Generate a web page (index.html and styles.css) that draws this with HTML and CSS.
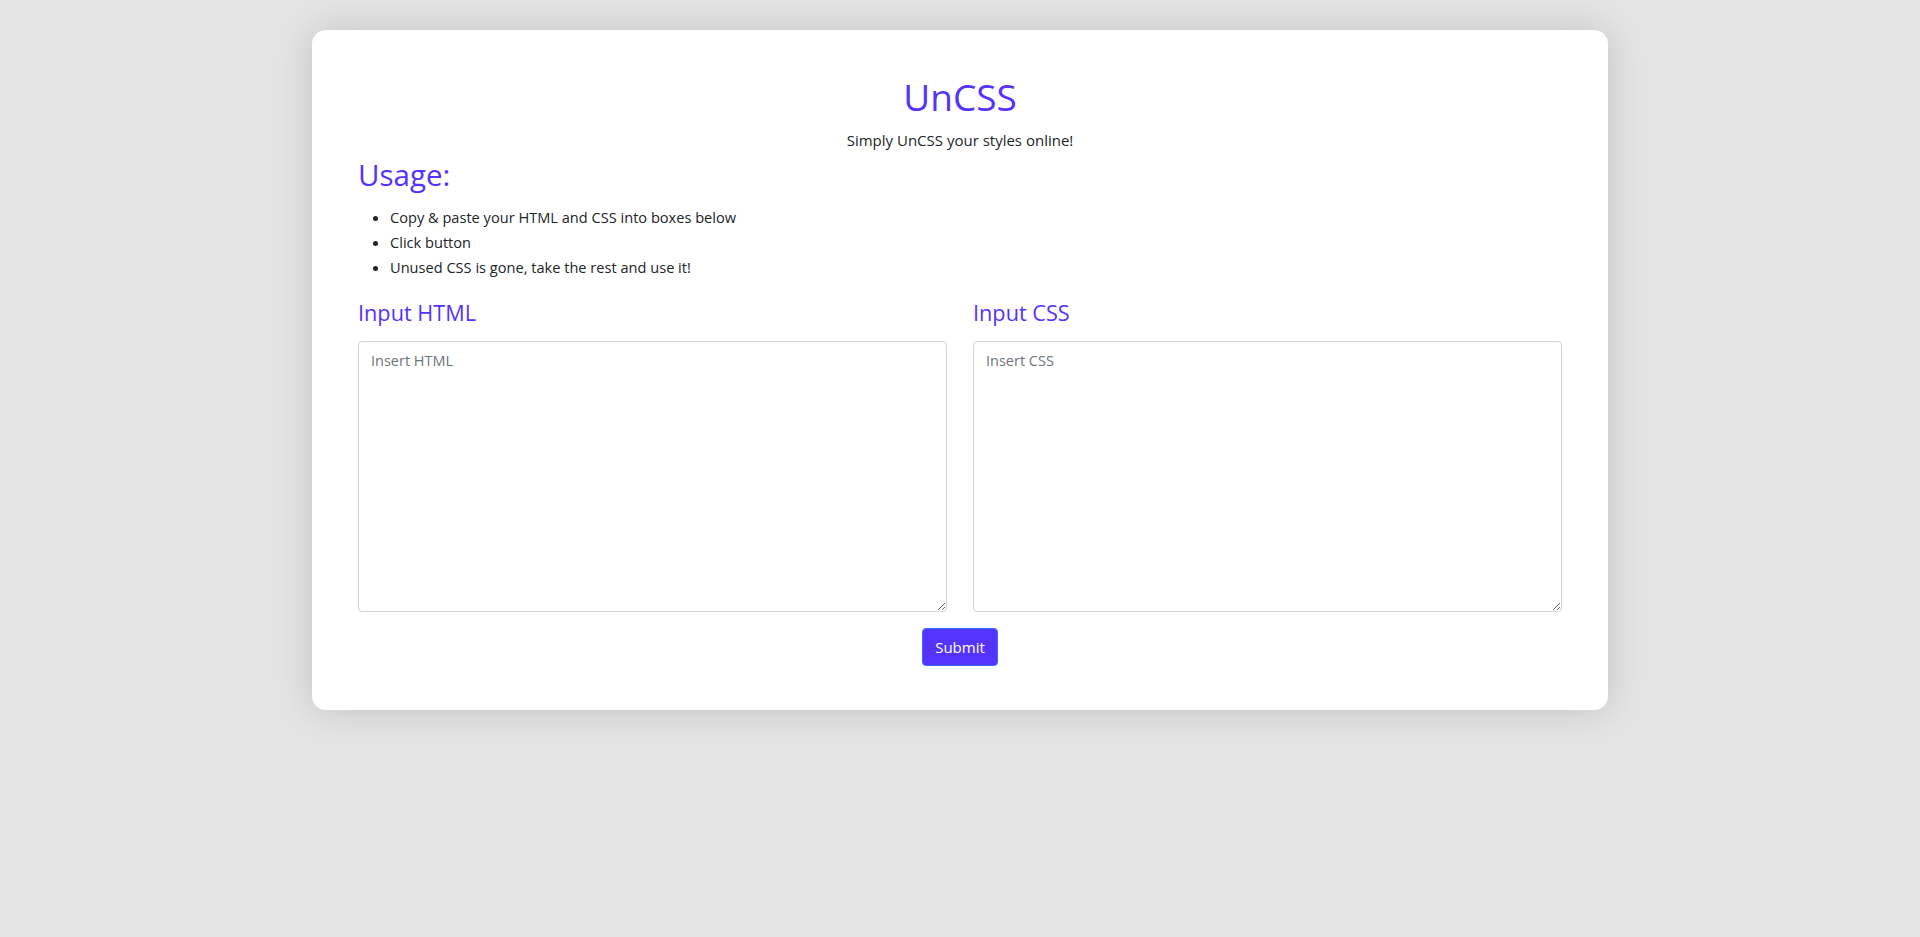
FILE: index.html
```html
<!DOCTYPE html>
<html lang="en">
<head>
<meta charset="utf-8">
<title>UnCSS</title>
<link rel="stylesheet" href="styles.css">
</head>
<body>
<main class="container">
  <section class="card">
    <header class="hero">
      <h1 class="title">UnCSS</h1>
      <p class="subtitle">Simply UnCSS your styles online!</p>
    </header>
    <h2 class="usage-title">Usage:</h2>
    <ul class="usage-list">
      <li>Copy &amp; paste your HTML and CSS into boxes below</li>
      <li>Click button</li>
      <li>Unused CSS is gone, take the rest and use it!</li>
    </ul>
    <form class="editor-form">
      <div class="editors">
        <div class="editor">
          <h3 class="editor-label">Input HTML</h3>
          <textarea class="editor-input" placeholder="Insert HTML"></textarea>
        </div>
        <div class="editor">
          <h3 class="editor-label">Input CSS</h3>
          <textarea class="editor-input" placeholder="Insert CSS"></textarea>
        </div>
      </div>
      <div class="actions">
        <button type="button" class="submit-btn">Submit</button>
      </div>
    </form>
  </section>
</main>
</body>
</html>
```

FILE: styles.css
```css
* { box-sizing: border-box; }

html, body {
  margin: 0;
  padding: 0;
}

body {
  background: #e4e4e4;
  font-family: "Open Sans", "Noto Sans", sans-serif;
  color: #212529;
  min-height: 937px;
}

.container {
  width: 1296px;
  margin: 30px auto 0;
}

.card {
  background: #ffffff;
  border-radius: 14px;
  padding: 45px 46px 44px;
  box-shadow: 0 0 36px rgba(0, 0, 0, 0.15);
}

.hero {
  text-align: center;
}

.title {
  margin: 0;
  font-size: 37px;
  font-weight: 400;
  line-height: 1.2;
  color: #5533ff;
}

.subtitle {
  margin: 10px 0 0;
  font-size: 15px;
  line-height: 1.5;
}

.usage-title {
  margin: 5px 0 0;
  font-size: 29.5px;
  font-weight: 400;
  line-height: 1.2;
  color: #5533ff;
}

.usage-list {
  margin: 13px 0 0;
  padding-left: 32px;
  font-size: 14.6px;
  line-height: 25px;
}

.editors {
  display: grid;
  grid-template-columns: 1fr 1fr;
  column-gap: 26px;
  margin-top: 20px;
}

.editor-label {
  margin: 0 0 15px;
  font-size: 21.7px;
  font-weight: 400;
  line-height: 1.2;
  color: #5533ff;
}

.editor-input {
  display: block;
  width: 100%;
  height: 271px;
  padding: 8px 12px;
  border: 1px solid #ced4da;
  border-radius: 4px;
  font-family: "Open Sans", "Noto Sans", sans-serif;
  font-size: 14.5px;
  line-height: 1.5;
  color: #212529;
  resize: both;
}

.editor-input::placeholder {
  color: #6c757d;
}

.actions {
  display: flex;
  justify-content: center;
  margin-top: 16px;
}

.submit-btn {
  width: 76px;
  height: 38px;
  padding: 0;
  border: 1px solid #3d6bff;
  border-radius: 4px;
  background: #5533ff;
  color: #ffffff;
  font-family: "Open Sans", "Noto Sans", sans-serif;
  font-size: 15px;
  font-weight: 400;
  cursor: pointer;
}
```
